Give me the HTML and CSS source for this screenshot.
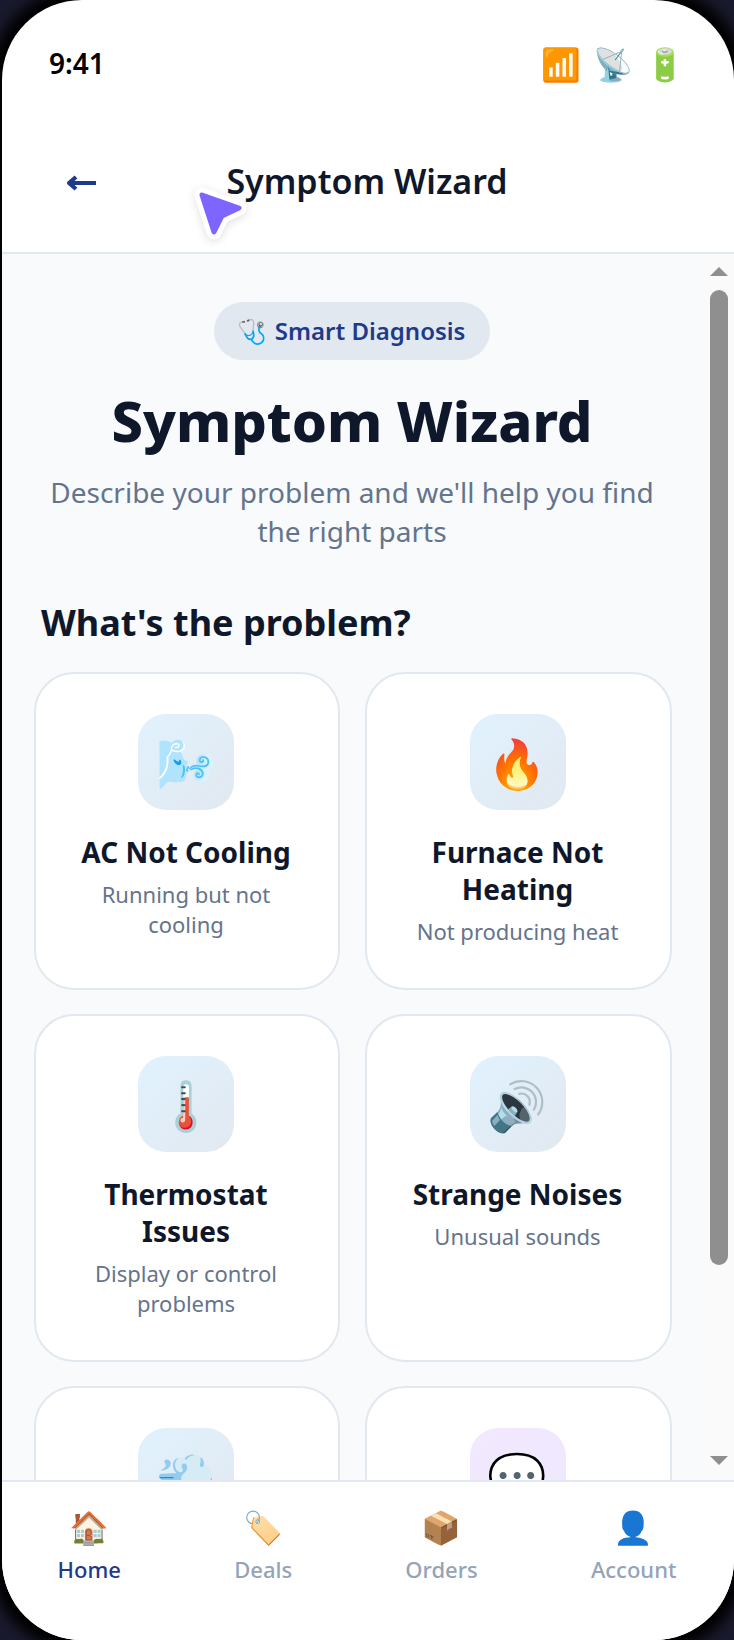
FILE: index.html
```html
<!DOCTYPE html>
<html lang="en">
<head>
    <meta charset="UTF-8">
    <meta name="viewport" content="width=device-width, initial-scale=1.0">
    <title>Symptom Wizard</title>
    <link rel="stylesheet" href="styles.css">
</head>
<body>
    <div class="phone">
        <div class="status-bar">
            <span class="time">9:41</span>
            <div class="status-icons">
                <span>📶</span>
                <span>📡</span>
                <span>🔋</span>
            </div>
        </div>
        <header class="top-bar">
            <svg class="back" width="32" height="20" viewBox="0 0 32 20">
                <path d="M31 10H5M11 4L4 10L11 16" fill="none" stroke="#1e3a8a" stroke-width="4.2" stroke-linejoin="round"/>
            </svg>
            <span class="top-title">Symptom Wizard</span>
        </header>
        <svg class="pointer" width="66" height="63" viewBox="0 0 66 63">
            <path d="M16 15 L53 28 L36 36 L28 52 Z" fill="#fff" stroke="#fff" stroke-width="15" stroke-linejoin="round"/>
            <path d="M16 15 L53 28 L36 36 L28 52 Z" fill="#7c66ff" stroke="#7c66ff" stroke-width="5" stroke-linejoin="round"/>
        </svg>
        <div class="scroll-wrap">
            <main class="content">
                <div class="hero">
                    <span class="badge"><span class="badge-icon">🩺</span> Smart Diagnosis</span>
                    <h1>Symptom Wizard</h1>
                    <p class="lead">Describe your problem and we'll help you find the right parts</p>
                </div>
                <h2>What's the problem?</h2>
                <div class="grid">
                    <div class="card">
                        <div class="card-icon">🌬️</div>
                        <div class="card-title">AC Not Cooling</div>
                        <div class="card-desc">Running but not cooling</div>
                    </div>
                    <div class="card">
                        <div class="card-icon">🔥</div>
                        <div class="card-title">Furnace Not Heating</div>
                        <div class="card-desc">Not producing heat</div>
                    </div>
                    <div class="card">
                        <div class="card-icon">🌡️</div>
                        <div class="card-title">Thermostat Issues</div>
                        <div class="card-desc">Display or control problems</div>
                    </div>
                    <div class="card">
                        <div class="card-icon">🔊</div>
                        <div class="card-title">Strange Noises</div>
                        <div class="card-desc">Unusual sounds</div>
                    </div>
                    <div class="card clipped">
                        <div class="card-icon">💨</div>
                    </div>
                    <div class="card clipped">
                        <div class="card-icon purple">💬</div>
                    </div>
                </div>
            </main>
            <div class="scrollbar">
                <span class="arrow-up"></span>
                <span class="thumb"></span>
                <span class="arrow-down"></span>
            </div>
        </div>
        <nav class="bottom-nav">
            <div class="nav-item active"><span class="nav-icon">🏠</span>Home</div>
            <div class="nav-item"><span class="nav-icon">🏷️</span>Deals</div>
            <div class="nav-item"><span class="nav-icon">📦</span>Orders</div>
            <div class="nav-item"><span class="nav-icon">👤</span>Account</div>
        </nav>
    </div>
</body>
</html>
```

FILE: styles.css
```css
* {
    box-sizing: border-box;
}
body {
    margin: 0;
    height: 1640px;
    overflow: hidden;
    background-color: #1a1a2e;
    font-family: "Noto Sans", "Noto Color Emoji", sans-serif;
    color: #0f172a;
}
.phone {
    position: relative;
    display: flex;
    flex-direction: column;
    width: 732px;
    height: 1640px;
    margin-left: 2px;
    background-color: #ffffff;
    border-radius: 80px;
    box-shadow: 0 0 14px 12px #000000;
    overflow: hidden;
}
.status-bar {
    display: flex;
    justify-content: space-between;
    align-items: center;
    height: 126px;
    padding: 0 49px 0 47px;
}
.time {
    font-size: 28px;
    font-weight: 600;
    color: #000000;
}
.status-icons {
    display: flex;
    gap: 12px;
    font-size: 32px;
}
.top-bar {
    position: relative;
    display: flex;
    justify-content: center;
    align-items: center;
    height: 128px;
    padding: 0 2px 16px 0;
    border-bottom: 2px solid #e2e8f0;
}
.back {
    position: absolute;
    left: 63px;
    top: 47px;
}
.top-title {
    font-size: 34px;
    font-weight: 600;
}
.pointer {
    position: absolute;
    left: 184px;
    top: 180px;
    filter: drop-shadow(0 2px 4px rgba(0,0,0,0.12));
}
.scroll-wrap {
    flex: 1;
    min-height: 0;
    display: flex;
    background-color: #f8fafc;
}
.content {
    flex: 1;
    min-width: 0;
    padding: 48px 32px;
    overflow: hidden;
}
.hero {
    margin-right: 2px;
    text-align: center;
}
.badge {
    display: inline-block;
    padding: 12px 25px 12px 24px;
    background-color: #e2e8f0;
    border-radius: 30px;
    font-size: 24px;
    line-height: 34px;
    font-weight: 600;
    color: #1e3a8a;
}
.badge-icon {
    margin-right: 1px;
}
h1 {
    margin: 27px 0 19px;
    font-size: 56px;
    line-height: 67px;
    font-weight: 800;
}
.lead {
    margin: 0;
    padding: 0 8px;
    font-size: 28px;
    line-height: 39px;
    color: #64748b;
}
h2 {
    margin: 47px 0 25px 7px;
    font-size: 36px;
    line-height: 49px;
    font-weight: 700;
}
.grid {
    display: grid;
    grid-template-columns: 306px 307px;
    gap: 24px 25px;
}
.card {
    padding: 40px 34px 42px 32px;
    background-color: #ffffff;
    border: 2px solid #e2e8f0;
    border-radius: 40px;
    text-align: center;
}
.card.clipped {
    height: 300px;
}
.card-icon {
    display: flex;
    justify-content: center;
    align-items: center;
    width: 96px;
    height: 96px;
    margin: 0 auto 23.5px;
    background: linear-gradient(135deg, #e0f2fe, #e2e8f0);
    border-radius: 28px;
    font-size: 48px;
}
.card-icon.purple {
    background: linear-gradient(135deg, #f3e8ff, #ede9fe);
}
.card-title {
    font-size: 28px;
    line-height: 37.5px;
    font-weight: 700;
}
.card-desc {
    margin-top: 7.5px;
    font-size: 22px;
    line-height: 30px;
    color: #64748b;
}
.scrollbar {
    flex: none;
    display: flex;
    flex-direction: column;
    align-items: center;
    width: 30px;
    padding: 13px 0 15px;
    background-color: #fafafa;
}
.arrow-up,
.arrow-down {
    flex: none;
    width: 0;
    height: 0;
    border-left: 9px solid transparent;
    border-right: 9px solid transparent;
}
.arrow-up {
    border-bottom: 9px solid #8f8f8f;
}
.arrow-down {
    margin-top: auto;
    border-top: 9px solid #8f8f8f;
}
.thumb {
    width: 18px;
    height: 975px;
    margin-top: 14px;
    background-color: #8f8f8f;
    border-radius: 9px;
}
.bottom-nav {
    display: flex;
    justify-content: space-around;
    height: 160px;
    margin-left: -1px;
    padding: 23px 1px 0 0;
    border-top: 2px solid #e2e8f0;
    background-color: #ffffff;
}
.nav-item {
    display: flex;
    flex-direction: column;
    align-items: center;
    gap: 6px;
    font-size: 22px;
    font-weight: 500;
    color: #94a3b8;
}
.nav-item.active {
    color: #1e3a8a;
}
.nav-icon {
    font-size: 32px;
}
```
